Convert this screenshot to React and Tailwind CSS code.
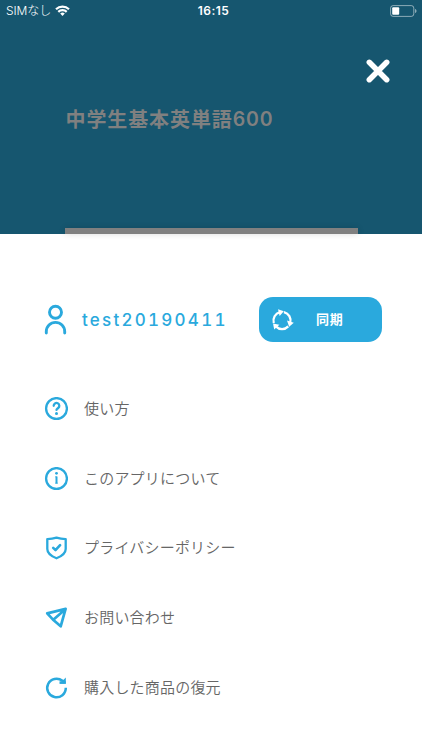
import React from 'react';

const iconProps = {
  viewBox: '0 0 24 24',
  fill: 'none',
  stroke: 'currentColor',
  strokeWidth: 2.3,
  strokeLinecap: 'round',
  strokeLinejoin: 'round',
  className: 'w-6 h-6 shrink-0',
};

const HelpIcon = () => (
  <svg {...iconProps}>
    <circle cx="12.5" cy="11.5" r="10.4" />
    <path d="M9.7 8.8a2.8 2.8 0 1 1 4.5 2.2c-1 .8-1.7 1.1-1.7 1.9" />
    <circle cx="12.5" cy="16.5" r="1.5" fill="currentColor" stroke="none" />
  </svg>
);

const InfoIcon = () => (
  <svg {...iconProps}>
    <circle cx="12.5" cy="11.5" r="10.4" />
    <path d="M12.5 9.5v7" strokeWidth="2" strokeLinecap="butt" />
    <path d="M11.6 9.8h.9M11.6 16.2h1.8" strokeWidth="0.8" />
    <circle cx="12.5" cy="6.3" r="1.4" fill="currentColor" stroke="none" />
  </svg>
);

const ShieldIcon = () => (
  <svg {...iconProps}>
    <path d="M12.5 1.7c3 1 6 1.4 9.2 1.4v10c0 4.2-4 7.2-9.2 9.2-5.2-2-9.2-5-9.2-9.2v-10c3.2 0 6.2-.4 9.2-1.4Z" />
    <path d="m9.2 11.9 2.3 2.2 4.6-4.9" strokeWidth="2.6" />
  </svg>
);

const SendIcon = () => (
  <svg {...iconProps} strokeWidth="2.7">
    <path d="M21.6 2.9 3.2 7.4l5.6 6 7.9 6.9ZM21.6 2.9 9.6 13.4" />
  </svg>
);

const RestoreIcon = () => (
  <svg {...iconProps} strokeWidth="2.5" strokeLinecap="butt">
    <path d="M21.8 11.8a9.3 9.3 0 1 1-3.4-7l2 1.6" />
    <path d="M21.8 1.5v6.2h-6.3Z" fill="currentColor" stroke="none" />
    <path d="M15.5 6.5h6.300" strokeWidth="2.4" />
  </svg>
);

const UserIcon = () => (
  <svg
    viewBox="0 0 24 32"
    fill="none"
    stroke="currentColor"
    strokeWidth="2.9"
    strokeLinecap="round"
    className="w-6 h-8 shrink-0"
  >
    <circle cx="11.5" cy="8.2" r="6" />
    <path d="M2.3 29v-1.4a9.2 9.2 0 0 1 18.4 0V29" />
  </svg>
);

const SyncIcon = () => (
  <svg viewBox="0 0 24 24" fill="none" stroke="currentColor" strokeWidth="2.3" className="w-6 h-6 shrink-0">
    {[0, 120, 240].map((deg) => (
      <g key={deg} transform={`rotate(${deg} 11 12.5)`}>
        <path d="M2.8 15A8.6 8.6 0 0 1 9 4.2" />
        <path d="m7 1.2 5.8 2-4.2 4.9Z" fill="currentColor" stroke="none" />
      </g>
    ))}
  </svg>
);

const menuItems = [
  { label: '使い方', icon: HelpIcon },
  { label: 'このアプリについて', icon: InfoIcon },
  { label: 'プライバシーポリシー', icon: ShieldIcon },
  { label: 'お問い合わせ', icon: SendIcon },
  { label: '購入した商品の復元', icon: RestoreIcon },
];

const StatusBar = () => (
  <div className="grid grid-cols-3 items-center h-[22px] pl-1.5 pr-[5px] text-white">
    <div className="flex items-center gap-1 text-[12px] whitespace-nowrap">
      <span className="font-['Inter','Noto_Sans_CJK_JP',sans-serif] font-light tracking-[-0.1px]">SIMなし</span>
      <svg viewBox="0 0 15 11" className="w-[15px] h-[11px] -mt-0.5" fill="none" stroke="currentColor" strokeWidth="2.2">
        <path d="M1 4.2a9.4 9.4 0 0 1 13 0M3.3 6.9a6 6 0 0 1 8.4 0" />
        <path d="M7.5 11 5.2 8.6a3.3 3.3 0 0 1 4.6 0Z" fill="currentColor" stroke="none" />
      </svg>
    </div>
    <div className="text-center text-[12px] font-semibold tracking-[0.5px] pl-1 font-['Inter',sans-serif]">16:15</div>
    <div className="flex justify-end">
      <svg viewBox="0 0 27 12" className="w-[27px] h-3" fill="none">
        <rect x=".6" y=".6" width="23.2" height="10.8" rx="2.5" stroke="#fff" strokeOpacity=".5" />
        <rect x="2.2" y="2.2" width="7" height="7.6" rx="1" fill="#fff" />
        <path d="M25 4v4c1-.3 1.5-1 1.5-2S26 4.3 25 4Z" fill="#fff" fillOpacity=".5" />
      </svg>
    </div>
  </div>
);

const App = () => (
  <div className="w-full h-[750px] overflow-hidden bg-white font-['Noto_Sans_CJK_JP',sans-serif]">
    <header className="flex flex-col h-[234px] bg-[#16566f]">
      <StatusBar />
      <button type="button" aria-label="close" className="self-end mt-[37px] mr-8 text-white">
        <svg viewBox="0 0 24 24" className="w-6 h-6" fill="none" stroke="currentColor" strokeWidth="5.5" strokeLinecap="round">
          <path d="m3.3 3.3 17.4 17.4M20.7 3.3 3.3 20.7" />
        </svg>
      </button>
      <h1 className="flex items-center mt-[21px] ml-[65.5px] text-[20px] leading-[30px] font-bold tracking-[0.9px] text-[#808080]">
        中学生基本英単語
        <span className="font-['Inter',sans-serif] font-semibold text-[19.5px] tracking-[0.8px]">600</span>
      </h1>
      <div className="mt-auto ml-[65px] w-[293px] h-1.5 bg-[#808080] shadow-[0_0_6px_rgba(0,0,0,0.15)]" />
    </header>

    <main className="pl-11 pr-10">
      <div className="flex items-center h-[45px] mt-[63px] text-[#2aa9dd]">
        <UserIcon />
        <span className="ml-3.5 mt-0.5 text-[17px] font-medium tabular-nums tracking-[2.25px] font-['Inter',sans-serif]">
          test20190411
        </span>
        <button
          type="button"
          className="flex items-center w-[123px] h-[45px] ml-auto pl-3 rounded-[14px] bg-[#2aa9dd] text-white"
        >
          <SyncIcon />
          <span className="ml-[21px] -mt-px text-[13px] font-bold tracking-[0.8px]">同期</span>
        </button>
      </div>

      <nav className="flex flex-col mt-8">
        {menuItems.map(({ label, icon: Icon }) => (
          <a key={label} className="flex items-center h-[69.7px] text-[#2aa9dd]">
            <Icon />
            <span className="ml-4 -mt-px text-[15px] font-[350] tracking-[0.2px] text-[#666]">{label}</span>
          </a>
        ))}
      </nav>
    </main>
  </div>
);

export default App;
